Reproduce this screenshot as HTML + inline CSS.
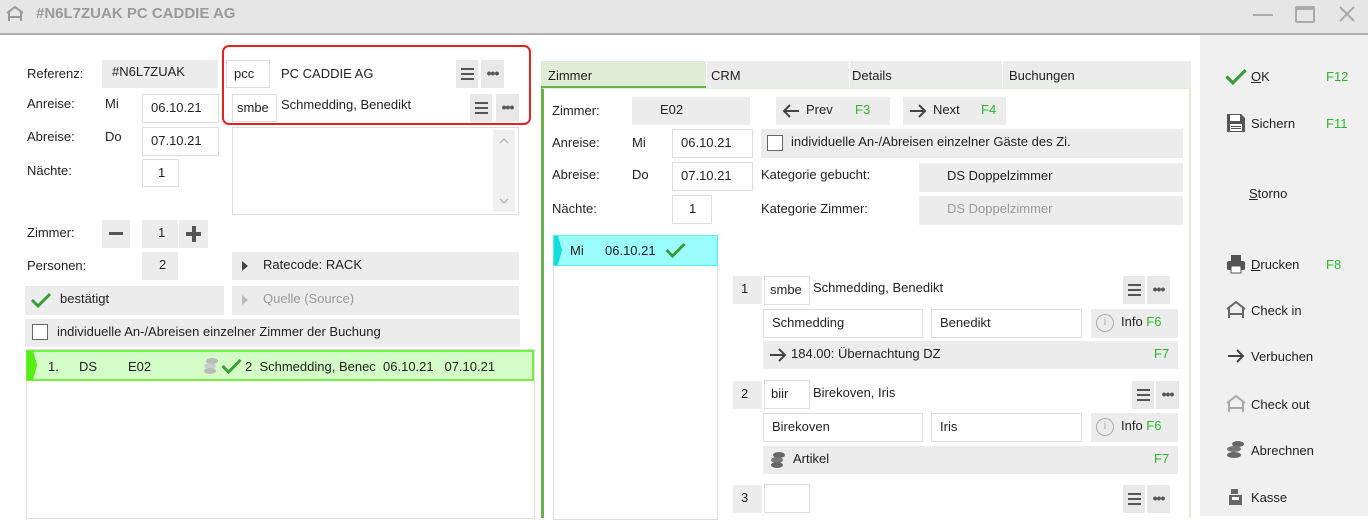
<!DOCTYPE html>
<html><head><meta charset="utf-8">
<style>
*{margin:0;padding:0;box-sizing:border-box}
body{width:1368px;height:516px;overflow:hidden;background:#fff;font-family:"Liberation Sans",sans-serif;font-size:13px;color:#222;position:relative}
.a{position:absolute}
.t{position:absolute;white-space:nowrap;line-height:16px}
.g{background:#ececec}
.w{background:#fff;border:1px solid #ddd}
.bx{position:absolute;line-height:26px;white-space:nowrap;padding-left:8px}
.f{color:#2db52d}
.menu{position:absolute;width:22px;height:28px;background:#e8e8e8}
.menu i{position:absolute;left:5px;width:13px;height:2px;background:#555}
.dots{position:absolute;width:23px;height:28px;background:#e8e8e8;text-align:center;font-weight:bold;color:#555;line-height:26px;font-size:14px;letter-spacing:-1px}
.ic{position:absolute;left:5px;top:5px;width:18px;height:18px;border:1.5px solid #aaa;border-radius:50%;line-height:15px;text-align:center;color:#aaa;font-size:11px;padding:0}
</style></head><body>
<svg width="0" height="0" style="position:absolute"><defs>
<symbol id="ck" viewBox="0 0 20 16"><path d="M1 8 L7 14 L19 2" stroke="#3a9d3a" stroke-width="3" fill="none"/></symbol>
<symbol id="ar" viewBox="0 0 18 16"><path d="M1 8 H16 M10 2 L16 8 L10 14" stroke="#444" stroke-width="2" fill="none"/></symbol>
<symbol id="al" viewBox="0 0 18 16"><path d="M17 8 H2 M8 2 L2 8 L8 14" stroke="#444" stroke-width="2" fill="none"/></symbol>
</defs></svg>
<!-- title bar -->
<div class="a" style="left:0;top:0;width:1368px;height:33px;background:#e6e6e6"></div>
<div class="a" style="left:0;top:33px;width:1368px;height:2px;background:#b0b0b0"></div>
<svg class="a" style="left:5px;top:4px" width="20" height="20" viewBox="0 0 20 20"><path d="M2 9 L10 3 L18 9 M4 8 V17 M16 8 V17 M4 13 H16" stroke="#999" stroke-width="2" fill="none"/></svg>
<div class="t" style="left:36px;top:6px;font-size:15px;font-weight:bold;color:#9a9a9a">#N6L7ZUAK PC CADDIE AG</div>
<div class="a" style="left:1253px;top:14px;width:20px;height:2px;background:#aaa"></div>
<div class="a" style="left:1295px;top:6px;width:20px;height:17px;border:2px solid #aaa;border-top-width:4px;border-radius:2px"></div>
<svg class="a" style="left:1338px;top:5px" width="18" height="18"><path d="M2 2 L16 16 M16 2 L2 16" stroke="#aaa" stroke-width="2"/></svg>

<!-- left form -->
<div class="t" style="left:27px;top:66px">Referenz:</div>
<div class="bx g" style="left:102px;top:60px;width:116px;height:28px;padding-left:10px;line-height:24px">#N6L7ZUAK</div>
<div class="t" style="left:27px;top:96px">Anreise:</div><div class="t" style="left:105px;top:96px">Mi</div>
<div class="bx w" style="left:142px;top:94px;width:77px;height:29px">06.10.21</div>
<div class="t" style="left:27px;top:129px">Abreise:</div><div class="t" style="left:105px;top:129px">Do</div>
<div class="bx w" style="left:142px;top:127px;width:77px;height:29px">07.10.21</div>
<div class="t" style="left:27px;top:163px">Nächte:</div>
<div class="bx w" style="left:142px;top:159px;width:37px;height:28px;padding-left:15px">1</div>

<div class="bx w" style="left:226px;top:60px;width:44px;height:28px;padding-left:7px">pcc</div>
<div class="t" style="left:281px;top:66px">PC CADDIE AG</div>
<div class="menu" style="left:456px;top:60px"><i style="top:8px"></i><i style="top:13px"></i><i style="top:18px"></i></div>
<div class="dots" style="left:481px;top:60px">•••</div>
<div class="bx w" style="left:232px;top:94px;width:45px;height:28px;padding-left:4px">smbe</div>
<div class="t" style="left:281px;top:97px">Schmedding, Benedikt</div>
<div class="menu" style="left:470px;top:94px"><i style="top:8px"></i><i style="top:13px"></i><i style="top:18px"></i></div>
<div class="dots" style="left:496px;top:94px">•••</div>
<div class="a" style="left:222px;top:45px;width:309px;height:80px;border:2px solid #e52222;border-radius:7px"></div>
<div class="a" style="left:232px;top:127px;width:287px;height:88px;border:1px solid #ddd"></div>
<div class="a" style="left:493px;top:130px;width:22px;height:82px;background:#f0f0f0"></div>
<svg class="a" style="left:499px;top:137px" width="10" height="8"><path d="M1 6 L5 2 L9 6" stroke="#bbb" fill="none" stroke-width="1.5"/></svg>
<svg class="a" style="left:499px;top:197px" width="10" height="8"><path d="M1 2 L5 6 L9 2" stroke="#bbb" fill="none" stroke-width="1.5"/></svg>

<div class="t" style="left:27px;top:225px">Zimmer:</div>
<div class="a g" style="left:102px;top:220px;width:28px;height:28px"><div class="a" style="left:7px;top:12px;width:14px;height:3px;background:#555"></div></div>
<div class="bx g" style="left:142px;top:220px;width:36px;height:28px;padding-left:16px">1</div>
<div class="a g" style="left:179px;top:220px;width:29px;height:28px"><div class="a" style="left:7px;top:12px;width:15px;height:4px;background:#555"></div><div class="a" style="left:13px;top:6px;width:4px;height:16px;background:#555"></div></div>
<div class="t" style="left:27px;top:258px">Personen:</div>
<div class="bx g" style="left:142px;top:252px;width:36px;height:28px;padding-left:17px">2</div>
<div class="bx g" style="left:232px;top:252px;width:287px;height:28px;padding-left:31px"><svg class="a" style="left:10px;top:9px" width="7" height="10"><path d="M0 0 L6 5 L0 10Z" fill="#444"/></svg>Ratecode: RACK</div>
<div class="bx g" style="left:25px;top:286px;width:199px;height:29px;padding-left:35px"><svg class="a" style="left:6px;top:6px" width="20" height="16"><use href="#ck"/></svg>bestätigt</div>
<div class="bx g" style="left:232px;top:286px;width:287px;height:29px;padding-left:31px;color:#999"><svg class="a" style="left:10px;top:9px" width="7" height="10"><path d="M0 0 L6 5 L0 10Z" fill="#bbb"/></svg>Quelle (Source)</div>
<div class="bx g" style="left:25px;top:319px;width:495px;height:28px;padding-left:8px"><span class="a" style="left:7px;top:5px;width:16px;height:16px;border:1px solid #666;background:#fff"></span><span style="padding-left:24px">individuelle An-/Abreisen einzelner Zimmer der Buchung</span></div>
<div class="a" style="left:26px;top:349px;width:509px;height:170px;border:1px solid #ddd"></div>
<div class="a" style="left:26px;top:350px;width:508px;height:31px;background:#d4fcc6;border:2px solid #77ee44"></div>
<svg class="a" style="left:27px;top:351px" width="12" height="29"><path d="M0 0 H6 L10 14 L6 29 H0Z" fill="#55ee11"/></svg>
<div class="t" style="left:48px;top:359px">1.</div><div class="t" style="left:79px;top:359px">DS</div><div class="t" style="left:128px;top:359px">E02</div>
<svg class="a" style="left:202px;top:357px" width="18" height="18"><ellipse cx="10" cy="4" rx="6" ry="3" fill="#bbb"/><ellipse cx="8" cy="9" rx="6" ry="3" fill="#ccc"/><ellipse cx="8" cy="14" rx="6" ry="3" fill="#bbb"/></svg>
<svg class="a" style="left:221px;top:358px" width="21" height="16"><use href="#ck"/></svg>
<div class="t" style="left:245px;top:359px">2&nbsp;&nbsp;Schmedding, Benec&nbsp;&nbsp;06.10.21&nbsp;&nbsp;&nbsp;07.10.21</div>

<!-- tabs -->
<div class="a g" style="left:541px;top:61px;width:650px;height:27px"></div>
<div class="a" style="left:541px;top:61px;width:165px;height:27px;background:#dfecd6;border-bottom:2px solid #6ab04c"></div>
<div class="a" style="left:706px;top:61px;width:1px;height:27px;background:#fff"></div>
<div class="a" style="left:849px;top:61px;width:1px;height:27px;background:#fff"></div>
<div class="a" style="left:1002px;top:61px;width:1px;height:27px;background:#fff"></div>
<div class="t" style="left:548px;top:68px">Zimmer</div><div class="t" style="left:711px;top:68px">CRM</div><div class="t" style="left:852px;top:68px">Details</div><div class="t" style="left:1009px;top:68px">Buchungen</div>
<div class="a" style="left:541px;top:88px;width:650px;height:430px;border-left:3px solid #6ab04c;border-top:1px solid #dfecd6;border-right:2px solid #dfecd6"></div>

<div class="t" style="left:552px;top:103px">Zimmer:</div>
<div class="bx g" style="left:632px;top:97px;width:118px;height:28px;padding-left:28px">E02</div>
<div class="bx g" style="left:776px;top:97px;width:114px;height:28px;padding-left:30px"><svg class="a" style="left:6px;top:6px" width="18" height="16"><use href="#al"/></svg>Prev<span class="f a" style="left:79px">F3</span></div>
<div class="bx g" style="left:903px;top:97px;width:103px;height:28px;padding-left:30px"><svg class="a" style="left:6px;top:6px" width="18" height="16"><use href="#ar"/></svg>Next<span class="f a" style="left:78px">F4</span></div>
<div class="t" style="left:552px;top:135px">Anreise:</div><div class="t" style="left:632px;top:135px">Mi</div>
<div class="bx w" style="left:672px;top:129px;width:81px;height:29px">06.10.21</div>
<div class="bx g" style="left:761px;top:129px;width:422px;height:29px;padding-left:30px"><span class="a" style="left:6px;top:6px;width:16px;height:16px;border:1px solid #666;background:#fff"></span>individuelle An-/Abreisen einzelner Gäste des Zi.</div>
<div class="t" style="left:552px;top:167px">Abreise:</div><div class="t" style="left:632px;top:167px">Do</div>
<div class="bx w" style="left:672px;top:162px;width:81px;height:29px">07.10.21</div>
<div class="t" style="left:761px;top:167px">Kategorie gebucht:</div>
<div class="bx g" style="left:919px;top:163px;width:264px;height:29px;padding-left:28px">DS Doppelzimmer</div>
<div class="t" style="left:552px;top:201px">Nächte:</div>
<div class="bx w" style="left:672px;top:195px;width:40px;height:29px;padding-left:16px">1</div>
<div class="t" style="left:761px;top:201px">Kategorie Zimmer:</div>
<div class="bx g" style="left:919px;top:196px;width:264px;height:29px;padding-left:28px;color:#999">DS Doppelzimmer</div>

<div class="a" style="left:553px;top:235px;width:165px;height:285px;border:1px solid #ddd"></div>
<div class="a" style="left:553px;top:235px;width:165px;height:31px;background:#9bfdfd;border:1px solid #55eeee"></div>
<svg class="a" style="left:554px;top:236px" width="10" height="29"><path d="M0 0 H4 L8 14 L4 29 H0Z" fill="#11dddd"/></svg>
<div class="t" style="left:570px;top:243px">Mi</div><div class="t" style="left:605px;top:243px">06.10.21</div>
<svg class="a" style="left:665px;top:242px" width="21" height="16"><use href="#ck"/></svg>

<!-- guest 1 -->
<div class="bx g" style="left:733px;top:276px;width:29px;height:28px">1</div>
<div class="bx w" style="left:764px;top:276px;width:46px;height:29px;padding-left:5px">smbe</div>
<div class="t" style="left:813px;top:280px">Schmedding, Benedikt</div>
<div class="menu" style="left:1123px;top:276px"><i style="top:8px"></i><i style="top:13px"></i><i style="top:18px"></i></div>
<div class="dots" style="left:1147px;top:276px">•••</div>
<div class="bx w" style="left:763px;top:309px;width:160px;height:29px">Schmedding</div>
<div class="bx w" style="left:931px;top:309px;width:151px;height:29px">Benedikt</div>
<div class="bx g" style="left:1091px;top:309px;width:87px;height:29px;padding-left:30px"><span class="ic">i</span>Info <span class="f">F6</span></div>
<div class="bx g" style="left:763px;top:341px;width:415px;height:28px;padding-left:28px"><svg class="a" style="left:6px;top:6px" width="18" height="16"><use href="#ar"/></svg>184.00: Übernachtung DZ<span class="f a" style="left:391px">F7</span></div>
<!-- guest 2 -->
<div class="bx g" style="left:733px;top:381px;width:29px;height:28px">2</div>
<div class="bx w" style="left:764px;top:380px;width:46px;height:29px;padding-left:6px">biir</div>
<div class="t" style="left:813px;top:385px">Birekoven, Iris</div>
<div class="menu" style="left:1132px;top:381px"><i style="top:8px"></i><i style="top:13px"></i><i style="top:18px"></i></div>
<div class="dots" style="left:1156px;top:381px">•••</div>
<div class="bx w" style="left:763px;top:413px;width:160px;height:29px">Birekoven</div>
<div class="bx w" style="left:931px;top:413px;width:151px;height:29px">Iris</div>
<div class="bx g" style="left:1091px;top:413px;width:87px;height:29px;padding-left:30px"><span class="ic">i</span>Info <span class="f">F6</span></div>
<div class="bx g" style="left:763px;top:446px;width:415px;height:28px;padding-left:30px"><svg class="a" style="left:6px;top:5px" width="18" height="18"><ellipse cx="10" cy="4" rx="6" ry="3" fill="#666"/><ellipse cx="8" cy="9" rx="6" ry="3" fill="#777"/><ellipse cx="8" cy="14" rx="6" ry="3" fill="#666"/></svg>Artikel<span class="f a" style="left:391px">F7</span></div>
<!-- guest 3 -->
<div class="bx g" style="left:733px;top:485px;width:29px;height:28px">3</div>
<div class="bx w" style="left:764px;top:484px;width:46px;height:29px"></div>
<div class="menu" style="left:1123px;top:485px"><i style="top:8px"></i><i style="top:13px"></i><i style="top:18px"></i></div>
<div class="dots" style="left:1147px;top:485px">•••</div>

<!-- right panel -->
<div class="a" style="left:1200px;top:35px;width:168px;height:481px;background:#f0f0f0"></div>
<svg class="a" style="left:1225px;top:68px" width="22" height="17"><use href="#ck"/></svg>
<div class="t" style="left:1251px;top:69px"><u>O</u>K</div><div class="t f" style="left:1326px;top:69px">F12</div>
<svg class="a" style="left:1226px;top:113px" width="20" height="20"><path d="M1 1 H15 L19 5 V19 H1Z" fill="#555"/><rect x="4" y="2" width="10" height="6" fill="#fff"/><rect x="4" y="11" width="12" height="7" fill="#fff"/><rect x="5" y="13" width="10" height="1" fill="#555"/><rect x="5" y="15" width="10" height="1" fill="#555"/></svg>
<div class="t" style="left:1251px;top:116px">Sichern</div><div class="t f" style="left:1326px;top:116px">F11</div>
<div class="t" style="left:1249px;top:186px"><u>S</u>torno</div>
<svg class="a" style="left:1226px;top:254px" width="20" height="20"><rect x="5" y="1" width="10" height="6" fill="#555"/><rect x="1" y="7" width="18" height="9" rx="2" fill="#555"/><rect x="5" y="12" width="10" height="7" fill="#fff" stroke="#555"/></svg>
<div class="t" style="left:1251px;top:257px"><u>D</u>rucken</div><div class="t f" style="left:1326px;top:257px">F8</div>
<svg class="a" style="left:1225px;top:299px" width="22" height="22"><path d="M2 10 L11 3 L20 10 M4 9 V19 M18 9 V19 M4 15 H18" stroke="#666" stroke-width="2" fill="none"/></svg>
<div class="t" style="left:1251px;top:303px">Check in</div>
<svg class="a" style="left:1226px;top:348px" width="20" height="16"><use href="#ar"/></svg>
<div class="t" style="left:1251px;top:349px">Verbuchen</div>
<svg class="a" style="left:1225px;top:393px" width="22" height="22"><path d="M2 10 L11 3 L20 10 M4 9 V19 M18 9 V19 M4 15 H18" stroke="#aaa" stroke-width="2" fill="none"/></svg>
<div class="t" style="left:1251px;top:397px">Check out</div>
<svg class="a" style="left:1226px;top:440px" width="20" height="20"><ellipse cx="12" cy="4" rx="6" ry="3" fill="#666"/><ellipse cx="8" cy="9" rx="7" ry="3" fill="#777"/><ellipse cx="8" cy="15" rx="7" ry="3" fill="#666"/></svg>
<div class="t" style="left:1251px;top:443px">Abrechnen</div>
<svg class="a" style="left:1227px;top:488px" width="18" height="18"><rect x="4" y="1" width="7" height="5" fill="#666"/><rect x="2" y="7" width="13" height="10" fill="#666"/><rect x="5" y="9" width="7" height="3" fill="#fff"/></svg>
<div class="t" style="left:1251px;top:490px">Kasse</div>
</body></html>
